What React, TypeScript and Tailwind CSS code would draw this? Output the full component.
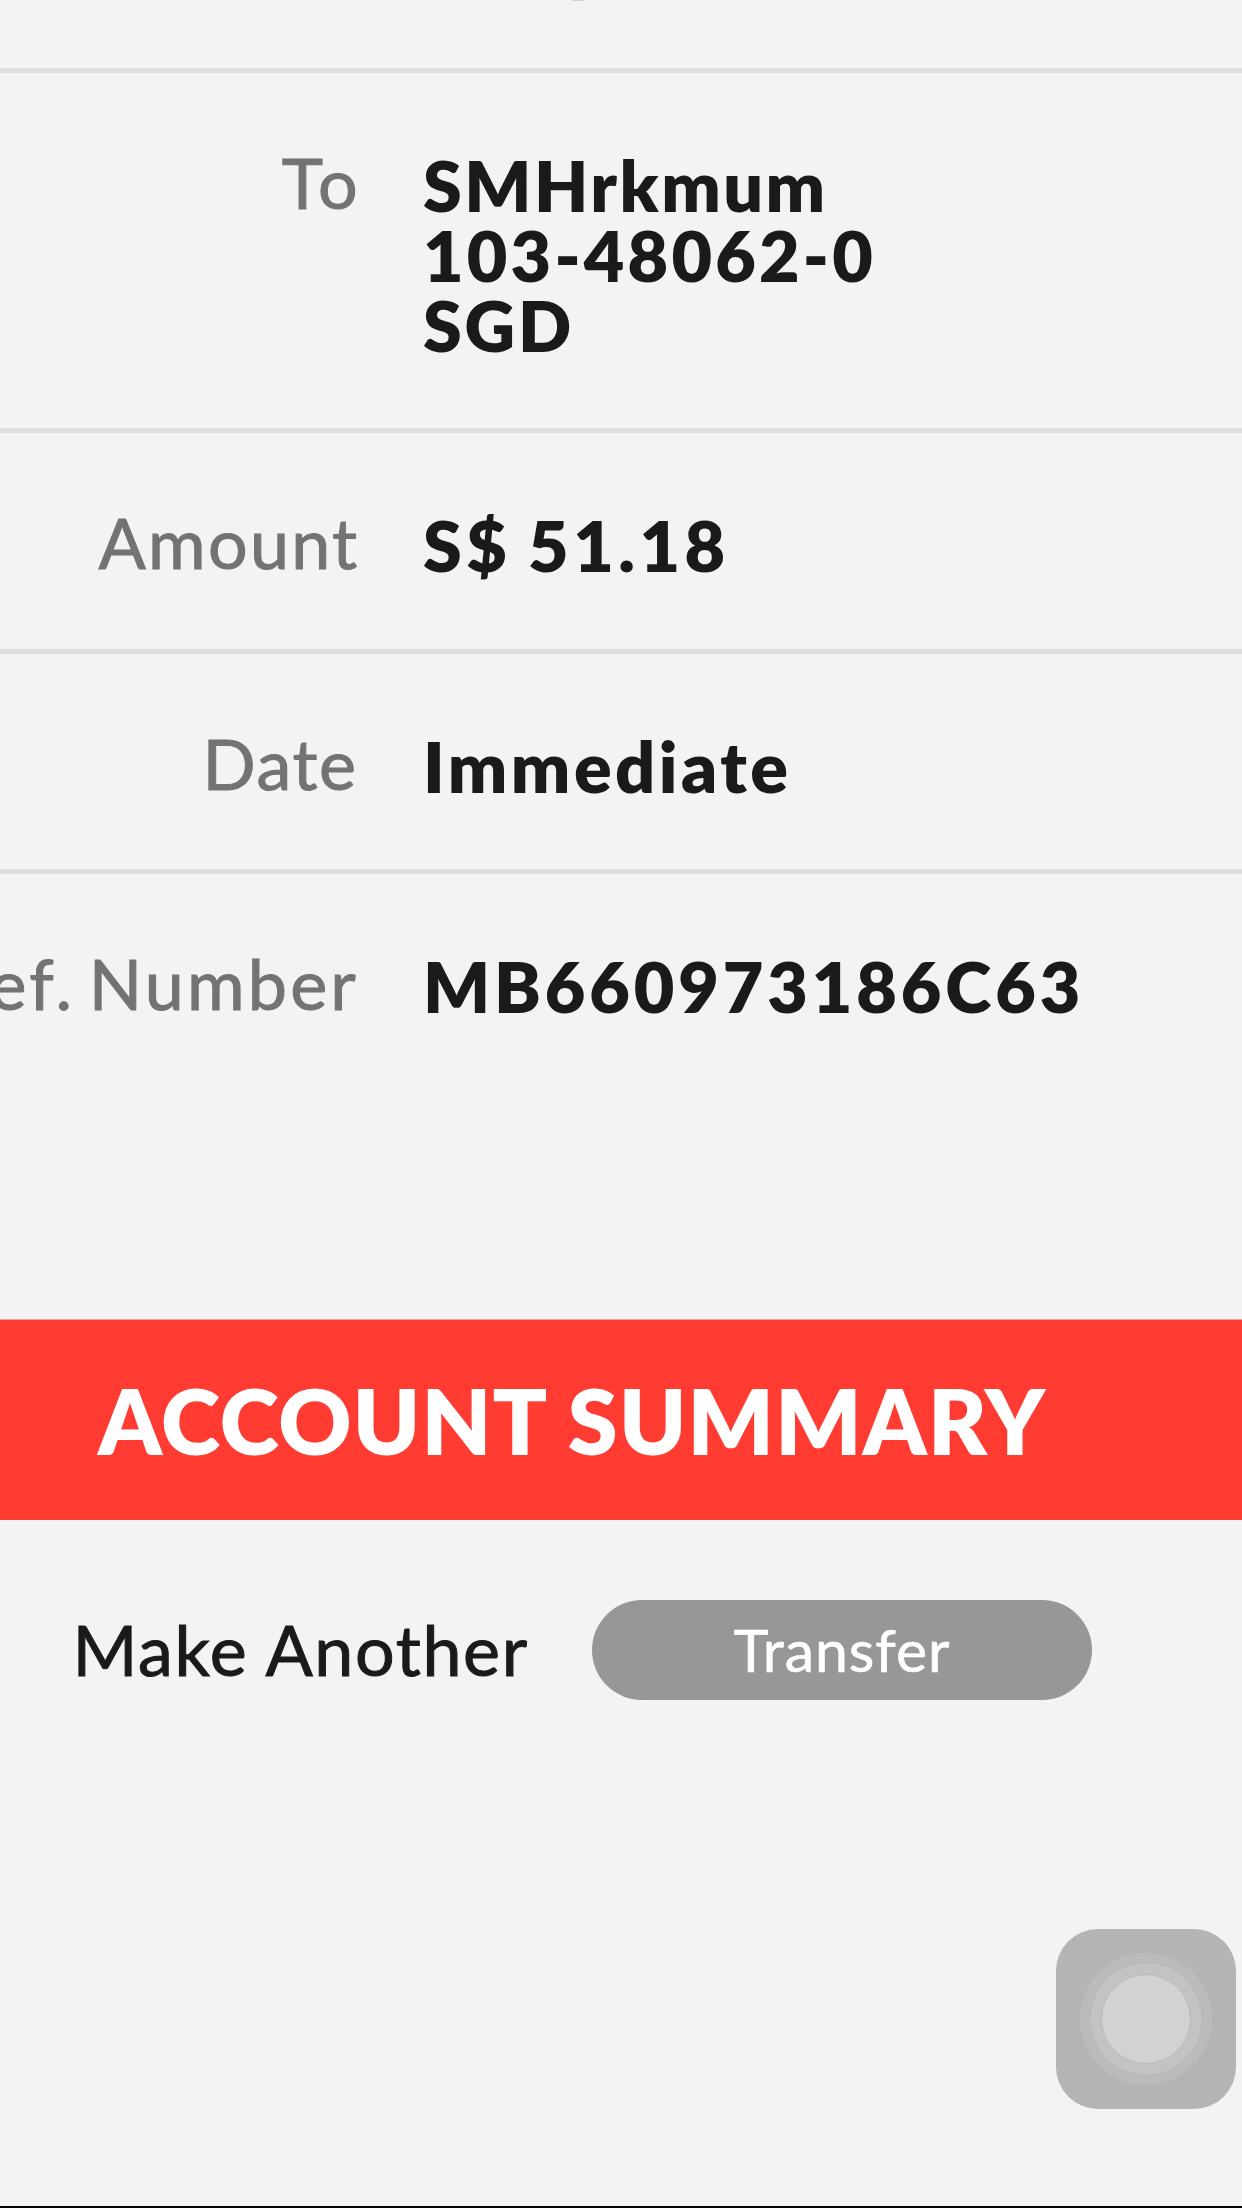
type Row = {
  label: string;
  labelClass: string;
  values: { text: string; className: string }[];
};

const rows: Row[] = [
  {
    label: "To",
    labelClass: "tracking-[3.4px] pr-[62px]",
    values: [
      { text: "SMHrkmum", className: "tracking-[2.5px]" },
      { text: "103-48062-0", className: "tracking-[3.2px]" },
      { text: "SGD", className: "tracking-[2.8px]" },
    ],
  },
  {
    label: "Amount",
    labelClass: "tracking-[2.3px] pr-[63.5px]",
    values: [{ text: "S$ 51.18", className: "tracking-[4.5px] [word-spacing:-4px]" }],
  },
  {
    label: "Date",
    labelClass: "tracking-[1.6px] pr-[65.5px]",
    values: [{ text: "Immediate", className: "tracking-[3.5px]" }],
  },
  {
    label: "Ref. Number",
    labelClass: "tracking-[3.2px] pr-[64px] [word-spacing:-7.5px]",
    values: [{ text: "MB660973186C63", className: "tracking-[3.9px]" }],
  },
];

const DetailRow = ({ row, className }: { row: Row; className: string }) => (
  <div className={`flex text-[70px] leading-[70px] whitespace-nowrap ${className}`}>
    <div
      className={`flex w-[423px] shrink-0 justify-end pt-[74.2px] text-[#737373] [-webkit-text-stroke:1px_#737373] ${row.labelClass}`}
    >
      {row.label}
    </div>
    <div className="pt-[77.2px] font-extrabold">
      {row.values.map((value) => (
        <div key={value.text} className={value.className}>
          {value.text}
        </div>
      ))}
    </div>
  </div>
);

// Floating home button that sits above the page
const AssistiveTouch = () => (
  <div className="absolute top-[1929px] left-[1056px] flex h-[180px] w-[180px] items-center justify-center rounded-[42px] bg-[#b4b4b4]">
    <div className="flex h-[132px] w-[132px] items-center justify-center rounded-full bg-[#bbbbbb]">
      <div className="flex h-[114px] w-[114px] items-center justify-center rounded-full border border-[#b5b5b5] bg-[#c3c3c3]">
        <div className="h-[90px] w-[90px] rounded-full border border-[#b9b9b9] bg-[#d2d2d2]" />
      </div>
    </div>
  </div>
);

const App = () => {
  return (
    <div className="relative flex h-[2208px] w-[1242px] flex-col overflow-hidden border-b-2 border-[#05050a] bg-[#f3f3f3] font-['Lato',sans-serif] text-[#1a1a1a]">
      {/* Tail of the previous row */}
      <div className="h-[72.9px] shrink-0 border-b-[5px] border-[#dedede]">
        <div className="ml-[572px] h-px w-[11px] bg-[#cfcfcf]" />
      </div>

      <DetailRow row={rows[0]} className="h-[360.3px] shrink-0 border-b-[5px] border-[#dedede]" />
      <DetailRow row={rows[1]} className="h-[220.4px] shrink-0 border-b-[5px] border-[#dedede]" />
      <DetailRow row={rows[2]} className="h-[220.4px] shrink-0 border-b-[5px] border-[#dedede]" />
      <DetailRow row={rows[3]} className="h-[445px] shrink-0" />

      <button className="h-[201px] shrink-0 border-t border-[#f0a19d] bg-[#ff3b32] pt-[1px] pl-[98px] text-left text-[90px] leading-[198px] font-extrabold tracking-[1.2px] whitespace-nowrap text-white">
        ACCOUNT SUMMARY
      </button>

      <div className="mt-[80px] flex h-[100px] shrink-0 items-start whitespace-nowrap">
        <div className="w-[592px] pt-[14.5px] pl-[72.5px] text-[70px] leading-[70px] tracking-[1.62px] [-webkit-text-stroke:1px_#1a1a1a]">
          Make Another
        </div>
        <button className="h-[100px] w-[500px] rounded-full bg-[#979797] text-center text-[59px] leading-[98px] tracking-[0.93px] text-white [-webkit-text-stroke:0.6px_#fff]">
          Transfer
        </button>
      </div>

      <AssistiveTouch />
    </div>
  );
};

export default App;
